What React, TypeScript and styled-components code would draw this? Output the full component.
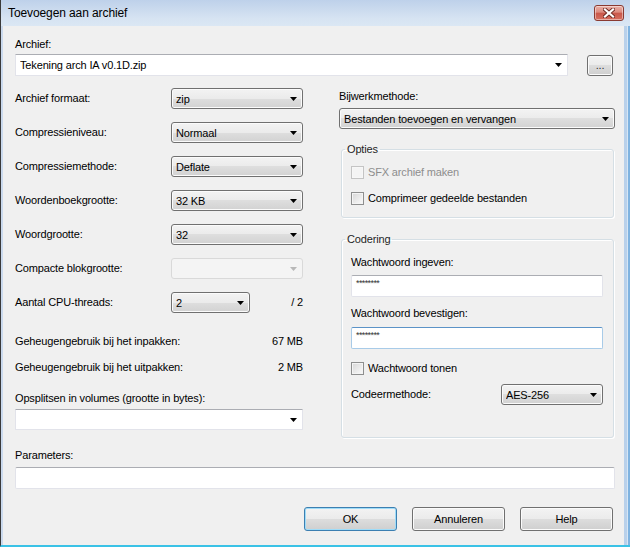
import React from 'react';
import styled, { createGlobalStyle, css } from 'styled-components';

const Global = createGlobalStyle`
  html, body { margin: 0; padding: 0; background: #ffffff; }
  body {
    font-family: "Liberation Sans", Arial, sans-serif;
    font-size: 11px;
    letter-spacing: -0.15px;
    color: #000;
  }
  * { box-sizing: border-box; }
  fieldset { min-width: 0; }
`;

const Window = styled.div`
  width: 630px;
  height: 547px;
  display: flex;
  flex-direction: column;
  border-left: 1px solid #3a3a3a;
  border-bottom: 2px solid #3ac2e6;
  background:
    linear-gradient(to left, #7fb3e0 0, #7fb3e0 2px, #d7e6f5 2px, #d7e6f5 3px, #b9d1eb 3px, #b9d1eb 6px, transparent 6px),
    #cbdaee;
`;

const TitleBar = styled.div`
  height: 26px;
  flex: 0 0 26px;
  display: flex;
  align-items: center;
  justify-content: space-between;
  padding: 0 6px 0 7px;
  background: linear-gradient(#bed1ea, #d6e3f2 70%, #dbe7f4);
`;

const Title = styled.div`
  font-size: 12px;
  letter-spacing: -0.1px;
  color: #000;
  line-height: 14px;
`;

const CloseButton = styled.div`
  width: 30px;
  height: 16px;
  border: 1px solid #8a3a31;
  border-radius: 3px;
  display: flex;
  align-items: center;
  justify-content: center;
  background: linear-gradient(#eab0a6 0%, #dc8a7e 45%, #c9574a 50%, #d66e5f 100%);
  box-shadow: inset 0 0 0 1px rgba(255, 255, 255, 0.45);
`;

const Client = styled.div`
  flex: 1;
  margin: 0 6px 0 2px;
  background: #f0f0f0;
  padding: 12px 9px 0 12px;
  display: flex;
  flex-direction: column;
`;

const Label = styled.div<{ $mt?: number; $disabled?: boolean }>`
  line-height: 13px;
  height: 13px;
  white-space: nowrap;
  margin-top: ${p => p.$mt ?? 0}px;
  color: ${p => (p.$disabled ? '#8f8f8f' : '#000')};
`;

const ArchiveRow = styled.div`
  display: flex;
  align-items: flex-end;
  margin-top: 3px;
  height: 22px;
`;

type Variant = 'list' | 'edit' | 'disabled';

const ComboBox = styled.div<{ $variant?: Variant; $width?: number; $height?: number; $mt?: number; $grow?: boolean }>`
  position: relative;
  display: flex;
  align-items: center;
  height: ${p => p.$height ?? 21}px;
  width: ${p => (p.$width ? `${p.$width}px` : 'auto')};
  flex: ${p => (p.$grow ? '1 1 auto' : '0 0 auto')};
  margin-top: ${p => p.$mt ?? 0}px;
  padding-left: 4px;
  border-radius: 3px;
  white-space: nowrap;
  ${p =>
    p.$variant === 'edit'
      ? css`
          background: #ffffff;
          border: 1px solid #e2e3ea;
          border-top-color: #abadb3;
          border-radius: 1px;
        `
      : p.$variant === 'disabled'
      ? css`
          background: #f4f4f4;
          border: 1px solid #d9d9d9;
        `
      : css`
          border: 1px solid #707070;
          background: linear-gradient(#f3f3f3 0%, #ebebeb 50%, #dedede 50%, #d2d2d2 100%);
          box-shadow: inset 0 0 0 1px #fbfbfb;
        `}
`;

const ComboText = styled.span`
  flex: 1;
  overflow: hidden;
`;

const ArrowBox = styled.span`
  width: 18px;
  height: 100%;
  display: flex;
  align-items: center;
  justify-content: center;
`;

const Arrow = ({ color = '#000' }: { color?: string }) => (
  <svg width="7" height="4" viewBox="0 0 7 4">
    <polygon points="0,0 7,0 3.5,4" fill={color} />
  </svg>
);

const Combo = ({
  text,
  variant = 'list',
  width,
  height,
  mt,
  grow,
}: {
  text?: string;
  variant?: Variant;
  width?: number;
  height?: number;
  mt?: number;
  grow?: boolean;
}) => (
  <ComboBox $variant={variant} $width={width} $height={height} $mt={mt} $grow={grow}>
    <ComboText>{text}</ComboText>
    <ArrowBox>
      <Arrow color={variant === 'disabled' ? '#b8b8b8' : '#000'} />
    </ArrowBox>
  </ComboBox>
);

const Button = styled.div<{ $default?: boolean; $width?: number; $height?: number }>`
  width: ${p => p.$width ?? 93}px;
  height: ${p => p.$height ?? 24}px;
  display: flex;
  align-items: center;
  justify-content: center;
  border-radius: 3px;
  border: 1px solid ${p => (p.$default ? '#3c7fb1' : '#707070')};
  background: linear-gradient(#f3f3f3 0%, #ebebeb 50%, #dddddd 50%, #cfcfcf 100%);
  box-shadow: inset 0 0 0 1px ${p => (p.$default ? '#9fdcf8' : '#fbfbfb')};
  white-space: nowrap;
`;

const BrowseButton = styled(Button)`
  margin-left: 19px;
  margin-right: 2px;
  align-items: flex-end;
  padding-bottom: 4px;
  color: #333;
`;

const Columns = styled.div`
  display: grid;
  grid-template-columns: 288px 276px;
  column-gap: 36px;
  align-items: start;
  margin-top: 12px;
`;

const Column = styled.div`
  display: flex;
  flex-direction: column;
`;

const FieldRow = styled.div`
  display: flex;
  align-items: center;
  justify-content: space-between;
  height: 21px;
  margin-bottom: 13px;
`;

const CpuRow = styled.div`
  display: flex;
  align-items: center;
  height: 21px;
`;

const CpuLabel = styled.div`
  flex: 0 0 156px;
  line-height: 13px;
`;

const Suffix = styled.div`
  flex: 1;
  text-align: right;
  line-height: 13px;
`;

const InfoRow = styled.div<{ $mt: number }>`
  display: flex;
  justify-content: space-between;
  line-height: 13px;
  height: 13px;
  margin-top: ${p => p.$mt}px;
`;

const Group = styled.fieldset<{ $mt: number; $pb: number }>`
  margin: ${p => p.$mt}px 1px 0 2px;
  padding: 0 10px ${p => p.$pb}px 9px;
  border: 1px solid #d5dfe5;
  border-radius: 3px;
  box-shadow: inset 1px 1px 0 #ffffff, 1px 1px 0 #ffffff;
  display: flex;
  flex-direction: column;
`;

const Legend = styled.legend`
  padding: 0 2px;
  margin-left: -6px;
  line-height: 13px;
  color: #1f1f1f;
`;

const CheckRow = styled.div<{ $mt: number; $disabled?: boolean }>`
  display: flex;
  align-items: center;
  gap: 4px;
  height: 13px;
  margin-top: ${p => p.$mt}px;
  color: ${p => (p.$disabled ? '#8d8d8d' : '#000')};
  line-height: 13px;
`;

const CheckBox = styled.span<{ $disabled?: boolean }>`
  width: 13px;
  height: 13px;
  flex: 0 0 13px;
  border: 1px solid ${p => (p.$disabled ? '#c4c4c4' : '#8e8f8f')};
  background: ${p =>
    p.$disabled ? '#f4f4f4' : 'linear-gradient(135deg, #d6d6d6 0%, #e9e9e9 50%, #fbfbfb 100%)'};
  box-shadow: inset 0 0 0 1px ${p => (p.$disabled ? '#f7f7f7' : '#f4f4f4')};
`;

const TextBox = styled.div<{ $focused?: boolean; $mt: number }>`
  height: 22px;
  margin-top: ${p => p.$mt}px;
  background: #ffffff;
  border: 1px solid ${p => (p.$focused ? '#a8cbe8' : '#e2e3ea')};
  border-top-color: ${p => (p.$focused ? '#5b93c7' : '#abadb3')};
  border-radius: 2px;
  padding: 1px 0 0 4px;
  display: flex;
  align-items: flex-start;
`;

const Stars = styled.span`
  font-size: 9px;
  letter-spacing: -0.6px;
  line-height: 12px;
  color: #333;
`;

const MethodRow = styled.div`
  display: flex;
  align-items: center;
  justify-content: space-between;
  margin-top: 9px;
`;

const ButtonRow = styled.div`
  display: flex;
  justify-content: flex-end;
  gap: 15px;
  margin-top: 18px;
  padding-right: 2px;
`;

const CloseIcon = () => (
  <svg width="12" height="10" viewBox="0 0 12 10">
    <path d="M2 1.5 L10 8.5 M10 1.5 L2 8.5" stroke="#6e2a22" strokeWidth="4" strokeLinecap="square" />
    <path d="M2 1.5 L10 8.5 M10 1.5 L2 8.5" stroke="#ffffff" strokeWidth="2.2" strokeLinecap="square" />
  </svg>
);

export default function App() {
  return (
    <>
      <Global />
      <Window>
        <TitleBar>
          <Title>Toevoegen aan archief</Title>
          <CloseButton>
            <CloseIcon />
          </CloseButton>
        </TitleBar>
        <Client>
          <Label>Archief:</Label>
          <ArchiveRow>
            <Combo variant="edit" text="Tekening arch IA v0.1D.zip" height={22} grow />
            <BrowseButton $width={26} $height={21}>...</BrowseButton>
          </ArchiveRow>

          <Columns>
            <Column>
              <FieldRow>
                <Label>Archief formaat:</Label>
                <Combo text="zip" width={132} />
              </FieldRow>
              <FieldRow>
                <Label>Compressieniveau:</Label>
                <Combo text="Normaal" width={132} />
              </FieldRow>
              <FieldRow>
                <Label>Compressiemethode:</Label>
                <Combo text="Deflate" width={132} />
              </FieldRow>
              <FieldRow>
                <Label>Woordenboekgrootte:</Label>
                <Combo text="32 KB" width={132} />
              </FieldRow>
              <FieldRow>
                <Label>Woordgrootte:</Label>
                <Combo text="32" width={132} />
              </FieldRow>
              <FieldRow>
                <Label>Compacte blokgrootte:</Label>
                <Combo variant="disabled" width={132} />
              </FieldRow>
              <CpuRow>
                <CpuLabel>Aantal CPU-threads:</CpuLabel>
                <Combo text="2" width={79} />
                <Suffix>/ 2</Suffix>
              </CpuRow>
              <InfoRow $mt={22}>
                <span>Geheugengebruik bij het inpakken:</span>
                <span>67 MB</span>
              </InfoRow>
              <InfoRow $mt={13}>
                <span>Geheugengebruik bij het uitpakken:</span>
                <span>2 MB</span>
              </InfoRow>
              <Label $mt={18}>Opsplitsen in volumes (grootte in bytes):</Label>
              <Combo variant="edit" mt={4} />
            </Column>

            <Column>
              <Label $mt={2}>Bijwerkmethode:</Label>
              <Combo text="Bestanden toevoegen en vervangen" mt={5} />
              <Group $mt={14} $pb={12}>
                <Legend>Opties</Legend>
                <CheckRow $mt={10} $disabled>
                  <CheckBox $disabled />
                  <span>SFX archief maken</span>
                </CheckRow>
                <CheckRow $mt={13}>
                  <CheckBox />
                  <span>Comprimeer gedeelde bestanden</span>
                </CheckRow>
              </Group>
              <Group $mt={15} $pb={32}>
                <Legend>Codering</Legend>
                <Label $mt={10}>Wachtwoord ingeven:</Label>
                <TextBox $mt={6}>
                  <Stars>********</Stars>
                </TextBox>
                <Label $mt={10}>Wachtwoord bevestigen:</Label>
                <TextBox $mt={7} $focused>
                  <Stars>********</Stars>
                </TextBox>
                <CheckRow $mt={13}>
                  <CheckBox />
                  <span>Wachtwoord tonen</span>
                </CheckRow>
                <MethodRow>
                  <Label>Codeermethode:</Label>
                  <Combo text="AES-256" width={102} />
                </MethodRow>
              </Group>
            </Column>
          </Columns>

          <Label $mt={11}>Parameters:</Label>
          <TextBox $mt={5} />

          <ButtonRow>
            <Button $default>OK</Button>
            <Button>Annuleren</Button>
            <Button>Help</Button>
          </ButtonRow>
        </Client>
      </Window>
    </>
  );
}
